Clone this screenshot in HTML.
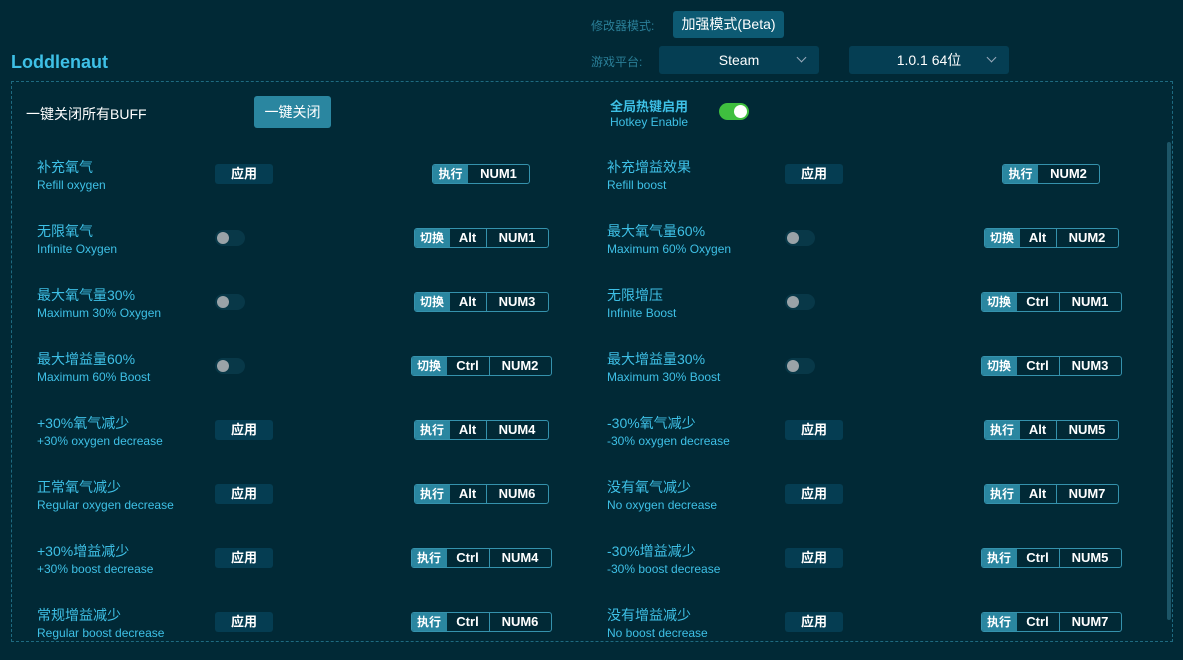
<!DOCTYPE html>
<html><head><meta charset="utf-8"><style>
*{margin:0;padding:0;box-sizing:border-box}
body{width:1183px;height:660px;background:#012936;font-family:"Liberation Sans","Noto Sans CJK SC",sans-serif;position:relative;overflow:hidden;color:#3ec0e6}
.abs{position:absolute}
.title{left:11px;top:52px;font-size:18px;font-weight:bold;color:#3ec0e6}
.box{left:11px;top:81px;width:1162px;height:561px;border:1px dashed #1e6a80}
.lab{font-size:12px;color:#2a7f98}
.sel{background:#053e53;color:#fff;font-size:14px;border-radius:3px;text-align:center;line-height:28px;height:28px}
.sel span{position:absolute;right:14px;top:8px;width:7px;height:7px;border-right:1.5px solid #9ab;border-bottom:1.5px solid #9ab;transform:rotate(45deg)}
.row{position:absolute;height:40px}
.t1{font-size:14px;color:#3ec0e6;line-height:18px}
.t2{font-size:12px;color:#3ec0e6;line-height:16px;margin-top:1px}
.btn{position:absolute;width:58px;height:20px;background:#053d52;color:#fff;font-size:13px;font-weight:bold;text-align:center;line-height:20px;border-radius:3px}
.tg{position:absolute;width:30px;height:16px;background:#083848;border-radius:8px}
.tg i{position:absolute;left:2px;top:2px;width:12px;height:12px;border-radius:6px;background:#9aa3a8}
.keys{position:absolute;width:200px;display:flex;justify-content:center;height:20px}
.kg{display:flex;border:1px solid #3592ad;border-radius:3px;overflow:hidden;height:20px}
.kg div{height:18px;line-height:18px;font-size:13px;color:#fff;text-align:center;font-weight:bold}
.kg .f{background:#2a86a0;width:35px;font-size:12px}
.kg .a{width:37px;border-right:1px solid #3592ad}
.kg .c{width:43px;border-right:1px solid #3592ad}
.kg .n{width:61px}
</style></head><body>
<div class="abs lab" style="left:591px;top:17px">修改器模式:</div>
<div class="abs" style="left:673px;top:11px;width:111px;height:27px;background:#0d5a73;border-radius:3px;color:#fff;font-size:14px;line-height:27px;text-align:center">加强模式(Beta)</div>
<div class="abs lab" style="left:591px;top:53px">游戏平台:</div>
<div class="abs sel" style="left:659px;top:46px;width:160px">Steam<span></span></div>
<div class="abs sel" style="left:849px;top:46px;width:160px">1.0.1 64位<span></span></div>
<div class="abs title">Loddlenaut</div>
<div class="abs box"></div>
<div class="abs" style="left:1167px;top:142px;width:4px;height:478px;background:#1c5567;border-radius:2px"></div>
<div class="abs" style="left:26px;top:104px;font-size:14px;color:#fff">一键关闭所有BUFF</div>
<div class="abs" style="left:254px;top:96px;width:77px;height:32px;background:#2a86a0;border-radius:3px;color:#fff;font-size:14px;line-height:32px;text-align:center">一键关闭</div>
<div class="abs" style="left:610px;top:96px;font-size:13px;font-weight:bold;color:#3ec0e6">全局热键启用</div>
<div class="abs" style="left:610px;top:115px;font-size:12px;color:#3ec0e6">Hotkey Enable</div>
<div class="abs" style="left:719px;top:103px;width:30px;height:17px;background:#3fbf3f;border-radius:9px"><div style="position:absolute;right:2px;top:2px;width:13px;height:13px;border-radius:7px;background:#fff"></div></div>

<div class="row" style="left:37px;top:158px"><div class="t1">补充氧气</div><div class="t2">Refill oxygen</div></div>
<div class="btn" style="left:215px;top:164px">应用</div>
<div class="keys" style="left:381px;top:164px"><div class="kg"><div class="f">执行</div><div class="n">NUM1</div></div></div>

<div class="row" style="left:37px;top:222px"><div class="t1">无限氧气</div><div class="t2">Infinite Oxygen</div></div>
<div class="tg" style="left:215px;top:230px"><i></i></div>
<div class="keys" style="left:381px;top:228px"><div class="kg"><div class="f">切换</div><div class="a">Alt</div><div class="n">NUM1</div></div></div>

<div class="row" style="left:37px;top:286px"><div class="t1">最大氧气量30%</div><div class="t2">Maximum 30% Oxygen</div></div>
<div class="tg" style="left:215px;top:294px"><i></i></div>
<div class="keys" style="left:381px;top:292px"><div class="kg"><div class="f">切换</div><div class="a">Alt</div><div class="n">NUM3</div></div></div>

<div class="row" style="left:37px;top:350px"><div class="t1">最大增益量60%</div><div class="t2">Maximum 60% Boost</div></div>
<div class="tg" style="left:215px;top:358px"><i></i></div>
<div class="keys" style="left:381px;top:356px"><div class="kg"><div class="f">切换</div><div class="c">Ctrl</div><div class="n">NUM2</div></div></div>

<div class="row" style="left:37px;top:414px"><div class="t1">+30%氧气减少</div><div class="t2">+30% oxygen decrease</div></div>
<div class="btn" style="left:215px;top:420px">应用</div>
<div class="keys" style="left:381px;top:420px"><div class="kg"><div class="f">执行</div><div class="a">Alt</div><div class="n">NUM4</div></div></div>

<div class="row" style="left:37px;top:478px"><div class="t1">正常氧气减少</div><div class="t2">Regular oxygen decrease</div></div>
<div class="btn" style="left:215px;top:484px">应用</div>
<div class="keys" style="left:381px;top:484px"><div class="kg"><div class="f">执行</div><div class="a">Alt</div><div class="n">NUM6</div></div></div>

<div class="row" style="left:37px;top:542px"><div class="t1">+30%增益减少</div><div class="t2">+30% boost decrease</div></div>
<div class="btn" style="left:215px;top:548px">应用</div>
<div class="keys" style="left:381px;top:548px"><div class="kg"><div class="f">执行</div><div class="c">Ctrl</div><div class="n">NUM4</div></div></div>

<div class="row" style="left:37px;top:606px"><div class="t1">常规增益减少</div><div class="t2">Regular boost decrease</div></div>
<div class="btn" style="left:215px;top:612px">应用</div>
<div class="keys" style="left:381px;top:612px"><div class="kg"><div class="f">执行</div><div class="c">Ctrl</div><div class="n">NUM6</div></div></div>

<div class="row" style="left:607px;top:158px"><div class="t1">补充增益效果</div><div class="t2">Refill boost</div></div>
<div class="btn" style="left:785px;top:164px">应用</div>
<div class="keys" style="left:951px;top:164px"><div class="kg"><div class="f">执行</div><div class="n">NUM2</div></div></div>

<div class="row" style="left:607px;top:222px"><div class="t1">最大氧气量60%</div><div class="t2">Maximum 60% Oxygen</div></div>
<div class="tg" style="left:785px;top:230px"><i></i></div>
<div class="keys" style="left:951px;top:228px"><div class="kg"><div class="f">切换</div><div class="a">Alt</div><div class="n">NUM2</div></div></div>

<div class="row" style="left:607px;top:286px"><div class="t1">无限增压</div><div class="t2">Infinite Boost</div></div>
<div class="tg" style="left:785px;top:294px"><i></i></div>
<div class="keys" style="left:951px;top:292px"><div class="kg"><div class="f">切换</div><div class="c">Ctrl</div><div class="n">NUM1</div></div></div>

<div class="row" style="left:607px;top:350px"><div class="t1">最大增益量30%</div><div class="t2">Maximum 30% Boost</div></div>
<div class="tg" style="left:785px;top:358px"><i></i></div>
<div class="keys" style="left:951px;top:356px"><div class="kg"><div class="f">切换</div><div class="c">Ctrl</div><div class="n">NUM3</div></div></div>

<div class="row" style="left:607px;top:414px"><div class="t1">-30%氧气减少</div><div class="t2">-30% oxygen decrease</div></div>
<div class="btn" style="left:785px;top:420px">应用</div>
<div class="keys" style="left:951px;top:420px"><div class="kg"><div class="f">执行</div><div class="a">Alt</div><div class="n">NUM5</div></div></div>

<div class="row" style="left:607px;top:478px"><div class="t1">没有氧气减少</div><div class="t2">No oxygen decrease</div></div>
<div class="btn" style="left:785px;top:484px">应用</div>
<div class="keys" style="left:951px;top:484px"><div class="kg"><div class="f">执行</div><div class="a">Alt</div><div class="n">NUM7</div></div></div>

<div class="row" style="left:607px;top:542px"><div class="t1">-30%增益减少</div><div class="t2">-30% boost decrease</div></div>
<div class="btn" style="left:785px;top:548px">应用</div>
<div class="keys" style="left:951px;top:548px"><div class="kg"><div class="f">执行</div><div class="c">Ctrl</div><div class="n">NUM5</div></div></div>

<div class="row" style="left:607px;top:606px"><div class="t1">没有增益减少</div><div class="t2">No boost decrease</div></div>
<div class="btn" style="left:785px;top:612px">应用</div>
<div class="keys" style="left:951px;top:612px"><div class="kg"><div class="f">执行</div><div class="c">Ctrl</div><div class="n">NUM7</div></div></div>
</body></html>
